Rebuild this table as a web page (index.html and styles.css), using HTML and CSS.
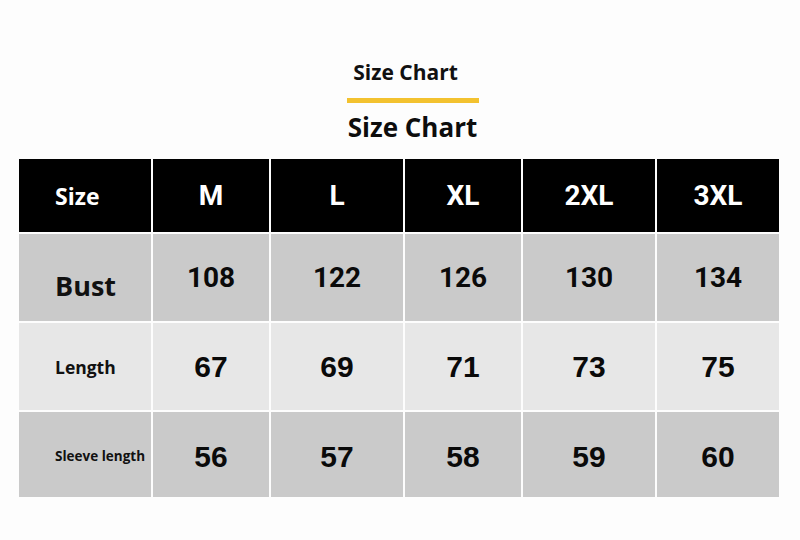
FILE: index.html
```html
<!DOCTYPE html>
<html lang="en">
<head>
<meta charset="utf-8">
<title>Size Chart</title>
<link rel="stylesheet" href="styles.css">
</head>
<body>
<div class="page">
  <header class="titles">
    <div class="subtitle">Size Chart</div>
    <div class="rule"></div>
    <h1 class="title">Size Chart</h1>
  </header>
  <div class="chart">
    <div class="cell head label-cell"><span class="lbl lbl-size">Size</span></div>
    <div class="cell head">M</div>
    <div class="cell head">L</div>
    <div class="cell head">XL</div>
    <div class="cell head">2XL</div>
    <div class="cell head">3XL</div>

    <div class="cell dark label-cell"><span class="lbl lbl-bust">Bust</span></div>
    <div class="cell dark num-a">108</div>
    <div class="cell dark num-a">122</div>
    <div class="cell dark num-a">126</div>
    <div class="cell dark num-a">130</div>
    <div class="cell dark num-a">134</div>

    <div class="cell light label-cell"><span class="lbl lbl-length">Length</span></div>
    <div class="cell light num-b">67</div>
    <div class="cell light num-b">69</div>
    <div class="cell light num-b">71</div>
    <div class="cell light num-b">73</div>
    <div class="cell light num-b">75</div>

    <div class="cell dark label-cell"><span class="lbl lbl-sleeve">Sleeve length</span></div>
    <div class="cell dark num-b num-low">56</div>
    <div class="cell dark num-b num-low">57</div>
    <div class="cell dark num-b num-low">58</div>
    <div class="cell dark num-b num-low">59</div>
    <div class="cell dark num-b num-low">60</div>
  </div>
</div>
</body>
</html>
```

FILE: styles.css
```css
html, body {
  margin: 0;
  padding: 0;
  background: #fdfdfd;
}

body {
  width: 800px;
  height: 540px;
  overflow: hidden;
  font-family: "Open Sans", "Noto Sans", sans-serif;
  color: #111;
}

.page {
  padding-top: 59px;
  display: flex;
  flex-direction: column;
  align-items: center;
}

.titles {
  display: flex;
  flex-direction: column;
  align-items: center;
  padding-left: 25px;
}

.subtitle {
  font-size: 21px;
  font-weight: 700;
  line-height: 26px;
  margin-right: 14px;
  color: #111;
}

.rule {
  width: 132px;
  height: 5px;
  background: #f3c22f;
  margin-top: 13px;
}

.title {
  margin: 8px 0 0 0;
  font-size: 26px;
  font-weight: 700;
  line-height: 32px;
  color: #0d0d0d;
}

.chart {
  margin-top: 16px;
  display: grid;
  grid-template-columns: 132px 116px 132px 116px 132px 122px;
  grid-template-rows: 73px 87px 87px 85px;
  gap: 2px;
  margin-left: -2px;
}

.cell {
  display: flex;
  align-items: center;
  justify-content: center;
  color: #111;
}

.head {
  background: #000;
  color: #fff;
  font-family: Roboto, "Liberation Sans", sans-serif;
  font-weight: 700;
  font-size: 28px;
}

.dark {
  background: #cacaca;
}

.light {
  background: #e7e7e7;
}

.label-cell {
  justify-content: flex-start;
  padding-left: 36px;
}

.lbl {
  font-family: "Open Sans", "Noto Sans", sans-serif;
  font-weight: 700;
  white-space: nowrap;
}

.lbl-size {
  font-size: 23px;
  color: #fff;
}

.lbl-bust {
  font-size: 27px;
  padding-top: 15px;
}

.lbl-length {
  font-size: 17.5px;
}

.lbl-sleeve {
  font-size: 13.5px;
  padding-top: 2px;
}

.num-a {
  font-family: Roboto, "Liberation Sans", sans-serif;
  font-weight: 700;
  font-size: 28px;
  color: #0a0a0a;
}

.num-b {
  font-family: "Liberation Sans", Arial, sans-serif;
  font-weight: 700;
  font-size: 30px;
  color: #0a0a0a;
}

.num-low {
  padding-top: 5px;
}
```
